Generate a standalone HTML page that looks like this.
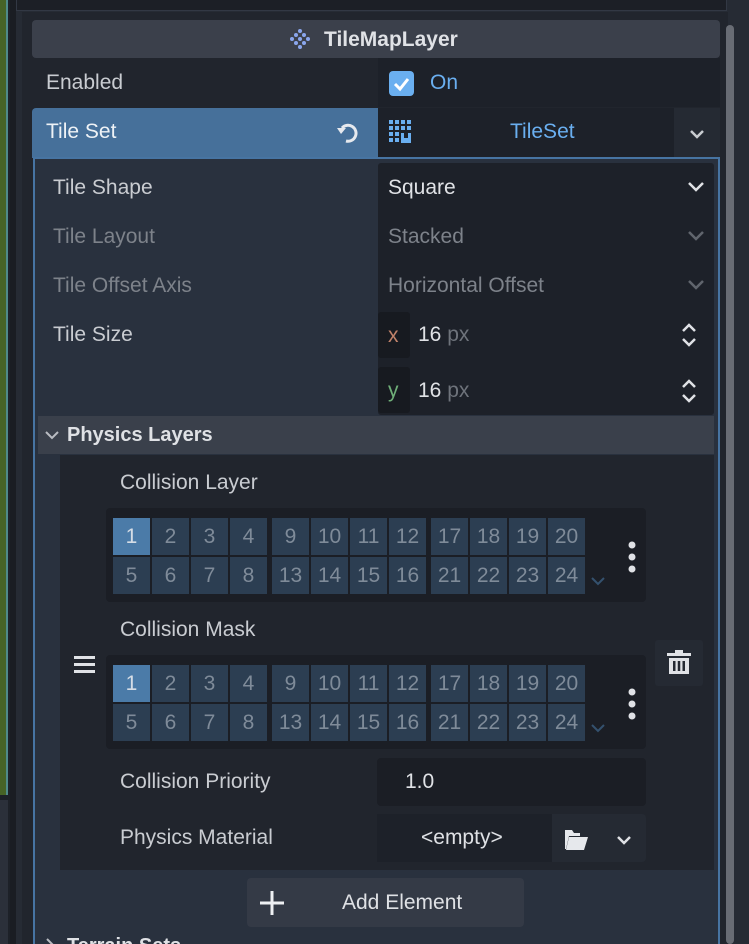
<!DOCTYPE html>
<html><head><meta charset="utf-8"><style>
*{box-sizing:border-box;margin:0;padding:0}
html,body{width:749px;height:944px;overflow:hidden}
body{background:#1d2128;font-family:"Liberation Sans",sans-serif;font-size:21px;color:#dfe1e5;position:relative}
.a{position:absolute}
.t{position:absolute;white-space:nowrap;line-height:1}
.cell{position:absolute;width:37px;height:37px;background:#2c3e52;color:#7f8b99;font-size:21px;text-align:center;line-height:37px}
.cell.on{background:#4b7ba8;color:#d5dde6}
</style></head><body>
<div class="a" style="left:0;top:0;width:8px;height:795px;background:#466326;border-right:2px solid #4f8a8a"></div>
<div class="a" style="left:0;top:800px;width:8px;height:144px;background:#2b303a"></div>
<div class="a" style="left:10px;top:0;width:6px;height:944px;background:#1a1d23"></div>
<div class="a" style="left:16px;top:0;width:733px;height:944px;background:#262b34"></div>
<div class="a" style="left:16px;top:0;width:711px;height:11px;background:#1c1f26;border:1px solid #323844;border-top:none"></div>
<div class="a" style="left:22px;top:12px;width:706px;height:932px;background:#21252d"></div>
<div class="a" style="left:726px;top:25px;width:8px;height:919px;background:#686c74;border-radius:4px"></div>
<div class="a" style="left:32px;top:20px;width:688px;height:38px;background:#3b404b;border-radius:4px"></div>
<svg class="a" style="left:287px;top:27px" width="26" height="24" viewBox="0 0 26 24"><g fill="#8aa6ee"><circle cx="13" cy="4" r="2"/><circle cx="9" cy="8" r="2"/><circle cx="17" cy="8" r="2"/><circle cx="5" cy="12" r="2"/><circle cx="13" cy="12" r="2"/><circle cx="21" cy="12" r="2"/><circle cx="9" cy="16" r="2"/><circle cx="17" cy="16" r="2"/><circle cx="13" cy="20" r="2"/></g></svg>
<div class="t" style="left:324px;top:29px;font-weight:bold;color:#e0e2e6">TileMapLayer</div>
<div class="a" style="left:378px;top:58px;width:342px;height:49px;background:#1d2129"></div>
<div class="t" style="left:46px;top:72px;color:#c9ccd1">Enabled</div>
<div class="a" style="left:389px;top:71px;width:25px;height:25px;background:#6aaff0;border-radius:4px"></div>
<svg class="a" style="left:389px;top:71px" width="25" height="25"><path d="M6 13l5 5 8-10" stroke="#fff" stroke-width="3" fill="none"/></svg>
<div class="t" style="left:430px;top:72px;color:#6aaff0">On</div>
<div class="a" style="left:32px;top:108px;width:346px;height:50px;background:#46709a;border-radius:4px 0 0 0"></div>
<div class="t" style="left:46px;top:121px;color:#eef2f6">Tile Set</div>
<svg class="a" style="left:334px;top:119px" width="28" height="28" viewBox="0 0 28 28"><path d="M8 9A8 8 0 1 1 12 22" stroke="#e6e9ee" stroke-width="3" fill="none"/><path d="M3 9h9l-5 6z" fill="#e6e9ee"/></svg>
<div class="a" style="left:378px;top:108px;width:296px;height:50px;background:#1d2129"></div>
<div class="a" style="left:674px;top:108px;width:46px;height:50px;background:#252a33"></div>
<svg class="a" style="left:388px;top:119px" width="28" height="28"><g fill="#6aaff0"><rect x="1" y="1" width="4" height="4"/><rect x="7" y="1" width="4" height="4"/><rect x="13" y="1" width="4" height="4"/><rect x="19" y="1" width="4" height="4"/><rect x="1" y="7" width="4" height="4"/><rect x="7" y="7" width="4" height="4"/><rect x="13" y="7" width="4" height="4"/><rect x="19" y="7" width="4" height="4"/><rect x="1" y="13" width="4" height="4"/><rect x="7" y="13" width="4" height="4"/><rect x="1" y="19" width="4" height="4"/><rect x="7" y="19" width="4" height="4"/><path d="M13 14h3v5h4v-5h3v10h-10z"/></g></svg>
<div class="t" style="left:510px;top:121px;color:#6aaff0">TileSet</div>
<svg class="a" style="left:689px;top:128px" width="16" height="12"><path d="M2 3l6 6 6-6" stroke="#c9ccd1" stroke-width="2.5" fill="none"/></svg>
<div class="a" style="left:33px;top:157px;width:687px;height:787px;background:#29313e;border:2px solid #4774a2;border-bottom:none"></div>
<div class="a" style="left:378px;top:163px;width:336px;height:252px;background:#1d2129;border-radius:3px"></div>
<div class="a" style="left:378px;top:312px;width:32px;height:46px;background:#171a20;border-radius:3px"></div>
<div class="a" style="left:378px;top:367px;width:32px;height:46px;background:#171a20;border-radius:3px"></div>
<div class="t" style="left:53px;top:177px;color:#c9ccd1">Tile Shape</div>
<div class="t" style="left:53px;top:226px;color:#7d828a">Tile Layout</div>
<div class="t" style="left:53px;top:275px;color:#7d828a">Tile Offset Axis</div>
<div class="t" style="left:53px;top:324px;color:#c9ccd1">Tile Size</div>
<div class="t" style="left:388px;top:177px;color:#e0e2e6">Square</div>
<div class="t" style="left:388px;top:226px;color:#7d828a">Stacked</div>
<div class="t" style="left:388px;top:275px;color:#7d828a">Horizontal Offset</div>
<svg class="a" style="left:687px;top:181px" width="18" height="12"><path d="M2 2l7 7 7-7" stroke="#e0e2e6" stroke-width="2.5" fill="none"/></svg>
<svg class="a" style="left:687px;top:230px" width="18" height="12"><path d="M2 2l7 7 7-7" stroke="#60656d" stroke-width="2.5" fill="none"/></svg>
<svg class="a" style="left:687px;top:279px" width="18" height="12"><path d="M2 2l7 7 7-7" stroke="#60656d" stroke-width="2.5" fill="none"/></svg>
<div class="t" style="left:388px;top:325px;color:#c0826a">x</div>
<div class="t" style="left:388px;top:380px;color:#6fae78">y</div>
<div class="t" style="left:418px;top:324px;color:#e0e2e6">16 <span style="color:#6e737b">px</span></div>
<div class="t" style="left:418px;top:380px;color:#e0e2e6">16 <span style="color:#6e737b">px</span></div>
<svg class="a" style="left:680px;top:322px" width="18" height="26"><path d="M3 9l6-6 6 6M3 17l6 6 6-6" stroke="#dfe1e5" stroke-width="2.5" fill="none"/></svg>
<svg class="a" style="left:680px;top:378px" width="18" height="26"><path d="M3 9l6-6 6 6M3 17l6 6 6-6" stroke="#dfe1e5" stroke-width="2.5" fill="none"/></svg>
<div class="a" style="left:38px;top:416px;width:676px;height:38px;background:#3a404b"></div>
<svg class="a" style="left:44px;top:429px" width="16" height="12"><path d="M2 3l6 6 6-6" stroke="#b9bcc2" stroke-width="2" fill="none"/></svg>
<div class="t" style="left:67px;top:425px;font-weight:bold;color:#dfe1e5;font-size:20px">Physics Layers</div>
<div class="a" style="left:60px;top:455px;width:654px;height:415px;background:#21252d"></div>
<div class="t" style="left:120px;top:472px;color:#c9ccd1">Collision Layer</div>
<div class="a" style="left:106px;top:508px;width:540px;height:94px;background:#1b1e25;border-radius:4px"></div>
<div class="t" style="left:120px;top:619px;color:#c9ccd1">Collision Mask</div>
<div class="a" style="left:106px;top:655px;width:540px;height:94px;background:#1b1e25;border-radius:4px"></div>
<div id="g1"></div>
<svg class="a" style="left:626px;top:540px" width="12" height="34"><g fill="#e0e2e6"><circle cx="6" cy="5" r="3.5"/><circle cx="6" cy="17" r="3.5"/><circle cx="6" cy="29" r="3.5"/></g></svg>
<svg class="a" style="left:626px;top:687px" width="12" height="34"><g fill="#e0e2e6"><circle cx="6" cy="5" r="3.5"/><circle cx="6" cy="17" r="3.5"/><circle cx="6" cy="29" r="3.5"/></g></svg>
<svg class="a" style="left:590px;top:575px" width="16" height="12"><path d="M2 3l6 6 6-6" stroke="#34516e" stroke-width="2" fill="none"/></svg>
<svg class="a" style="left:590px;top:722px" width="16" height="12"><path d="M2 3l6 6 6-6" stroke="#34516e" stroke-width="2" fill="none"/></svg>
<svg class="a" style="left:74px;top:654px" width="22" height="20"><g fill="#e0e2e6"><rect x="0" y="2" width="21" height="3"/><rect x="0" y="9" width="21" height="3"/><rect x="0" y="16" width="21" height="3"/></g></svg>
<div class="a" style="left:655px;top:640px;width:48px;height:46px;background:#252a33;border-radius:3px"></div>
<svg class="a" style="left:666px;top:650px" width="26" height="26"><g fill="#e0e2e6"><rect x="1" y="3" width="24" height="3"/><rect x="9" y="0" width="8" height="3"/><path d="M3 8h20v16h-20z M7 11v10h2.5v-10z M11.75 11v10h2.5v-10z M16.5 11v10h2.5v-10z" fill-rule="evenodd"/></g></svg>
<div class="t" style="left:120px;top:771px;color:#c9ccd1">Collision Priority</div>
<div class="a" style="left:377px;top:758px;width:269px;height:48px;background:#1b1e25;border-radius:4px"></div>
<div class="t" style="left:405px;top:771px;color:#e0e2e6">1.0</div>
<div class="t" style="left:120px;top:827px;color:#c9ccd1">Physics Material</div>
<div class="a" style="left:377px;top:814px;width:175px;height:48px;background:#1d2129"></div>
<div class="a" style="left:552px;top:814px;width:94px;height:48px;background:#252a33;border-radius:0 4px 4px 0"></div>
<div class="t" style="left:421px;top:827px;color:#dfe1e5">&lt;empty&gt;</div>
<svg class="a" style="left:563px;top:826px" width="26" height="26"><path d="M2 4h7l2 3h6v3H6l-3 13H2z M6 11h19l-4 13H3z" fill="#e6e8ec"/></svg>
<svg class="a" style="left:616px;top:834px" width="16" height="12"><path d="M2 3l6 6 6-6" stroke="#dfe1e5" stroke-width="2.5" fill="none"/></svg>
<div class="a" style="left:247px;top:878px;width:277px;height:49px;background:#343a46;border-radius:4px"></div>
<svg class="a" style="left:259px;top:890px" width="26" height="26"><path d="M13 1v24M1 13h24" stroke="#eef0f3" stroke-width="3"/></svg>
<div class="t" style="left:342px;top:892px;color:#dfe1e5">Add Element</div>
<div class="t" style="left:67px;top:936px;font-weight:bold;color:#dfe1e5;font-size:20px">Terrain Sets</div>
<svg class="a" style="left:44px;top:937px" width="12" height="16"><path d="M3 2l6 6-6 6" stroke="#b9bcc2" stroke-width="2" fill="none"/></svg>
<script>
var g=document.getElementById('g1'),h='';
var nums=[[1,2,3,4,9,10,11,12,17,18,19,20],[5,6,7,8,13,14,15,16,21,22,23,24]];
var gx=[113,272,431];
[518,665].forEach(function(y0){
 for(var r=0;r<2;r++)for(var i=0;i<12;i++){
  var x=gx[Math.floor(i/4)]+(i%4)*39, y=y0+r*39, n=nums[r][i];
  h+='<div class="cell'+(n==1?' on':'')+'" style="left:'+x+'px;top:'+y+'px">'+n+'</div>';
 }});
g.outerHTML=h;
</script>
</body></html>
